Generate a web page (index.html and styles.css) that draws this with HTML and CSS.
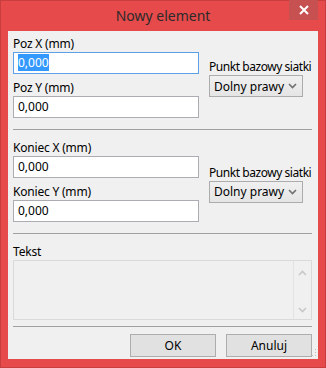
FILE: index.html
```html
<html lang="pl">
<head>
  <meta charset="UTF-8" />
  <title>Nowy element</title>
  <link rel="stylesheet" href="styles.css">
</head>
<body>
  <div class="window">
    <div class="titlebar">
      <span class="title">Nowy element</span>
      <div class="close">
        <svg width="10" height="10" viewBox="0 0 10 10"><path d="M1 1L9 9M9 1L1 9" stroke="#fff" stroke-width="2"/></svg>
      </div>
    </div>
    <div class="client">
      <div class="group">
        <div class="col-left">
          <div class="field">
            <label>Poz X (mm)</label>
            <div class="edit focus"><span class="sel">0,000</span></div>
          </div>
          <div class="field">
            <label>Poz Y (mm)</label>
            <div class="edit">0,000</div>
          </div>
        </div>
        <div class="col-right">
          <label>Punkt bazowy siatki</label>
          <div class="combo"><span>Dolny prawy</span>
            <svg width="9" height="6" viewBox="0 0 9 6"><path d="M1 1L4.5 4.5L8 1" stroke="#707070" stroke-width="1.6" fill="none"/></svg>
          </div>
        </div>
      </div>
      <div class="sep"></div>
      <div class="group">
        <div class="col-left">
          <div class="field">
            <label>Koniec X (mm)</label>
            <div class="edit">0,000</div>
          </div>
          <div class="field">
            <label>Koniec Y (mm)</label>
            <div class="edit">0,000</div>
          </div>
        </div>
        <div class="col-right lower">
          <label>Punkt bazowy siatki</label>
          <div class="combo"><span>Dolny prawy</span>
            <svg width="9" height="6" viewBox="0 0 9 6"><path d="M1 1L4.5 4.5L8 1" stroke="#707070" stroke-width="1.6" fill="none"/></svg>
          </div>
        </div>
      </div>
      <div class="sep"></div>
      <div class="text-group">
        <label>Tekst</label>
        <div class="memo">
          <div class="memo-body"></div>
          <div class="vscroll">
            <svg width="9" height="6" viewBox="0 0 9 6"><path d="M1 5L4.5 1.5L8 5" stroke="#c8c8c8" stroke-width="1.6" fill="none"/></svg>
            <svg width="9" height="6" viewBox="0 0 9 6"><path d="M1 1L4.5 4.5L8 1" stroke="#c8c8c8" stroke-width="1.6" fill="none"/></svg>
          </div>
        </div>
      </div>
      <div class="sep sep-last"></div>
      <div class="buttons">
        <button class="btn">OK</button>
        <button class="btn">Anuluj</button>
      </div>
      <svg class="grip" width="5" height="9" viewBox="0 0 5 9">
        <rect x="3" y="0" width="1" height="1" fill="#bbb"/>
        <rect x="3" y="3" width="1" height="1" fill="#bbb"/>
        <rect x="0" y="6" width="1" height="1" fill="#bbb"/>
        <rect x="3" y="6" width="1" height="1" fill="#bbb"/>
      </svg>
    </div>
  </div>
</body>
</html>
```

FILE: styles.css
```css
body { margin:0; background:#fff; font-family:"Noto Sans", "Open Sans", sans-serif; font-size:12px; color:#000; }
.window {
  width:326px; height:368px; box-sizing:border-box;
  background:#e64a4a; border:1px solid #c83d3d;
  padding:0 7px 8px 7px;
  display:flex; flex-direction:column;
}
.titlebar { height:30px; display:flex; justify-content:center; align-items:center; position:relative; }
.title { font-size:14px; color:#2b2b2b; margin-top:-1px; }
.close {
  position:absolute; top:-1px; right:0;
  width:29px; height:20px; background:#c75050;
  display:flex; justify-content:center; align-items:center;
}
.client {
  flex:1; background:#f0f0f0; padding:5px 6px 0 5px; position:relative;
}
label { display:block; height:16px; line-height:16px; white-space:nowrap; letter-spacing:-0.2px; }
.group { display:flex; gap:10px; }
.col-left { flex:0 0 186px; display:flex; flex-direction:column; gap:6px; }
.col-right { flex:1; min-width:0; display:flex; flex-direction:column; justify-content:center; padding-top:2px; }
.col-right.lower { padding-top:5px; }
.col-right label { letter-spacing:-0.45px; }
.edit {
  height:22px; box-sizing:border-box; border:1px solid #abadb3; background:#fff;
  padding:0 4px; line-height:20px;
}
.edit.focus { border-color:#5ea0e6; }
.sel { background:#3399ff; color:#fff; }
.combo {
  width:94px; height:22px; box-sizing:border-box; border:1px solid #acacac;
  background:linear-gradient(#f0f0f0, #e5e5e5);
  display:flex; justify-content:space-between; align-items:center; padding:0 5px 0 4px;
}
.sep { height:1px; background:#a0a0a0; margin:11px 0 10px; }
.sep-last { margin:6px 0 7px; }
.text-group label { margin-top:1px; }
.memo { height:60px; box-sizing:border-box; border:1px solid #dadada; display:flex; }
.memo-body { flex:1; }
.vscroll {
  width:17px; border-left:1px solid #e3e3e3;
  display:flex; flex-direction:column; justify-content:space-between; align-items:center;
  padding:9px 0 6px;
}
.buttons { display:flex; justify-content:flex-end; gap:10px; }
.btn {
  width:86px; height:23px; border:1px solid #adadad; background:#e1e1e1;
  font-family:inherit; font-size:12px; color:#000; padding:0;
}
.grip { position:absolute; right:1px; bottom:1px; }
```
